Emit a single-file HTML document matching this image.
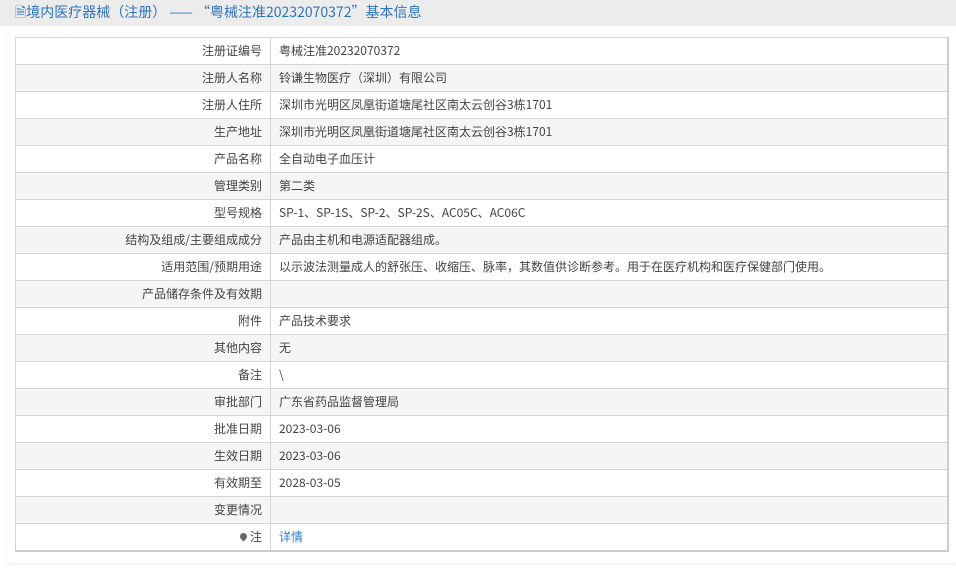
<!DOCTYPE html>
<html><head><meta charset="utf-8"><style>
html,body{margin:0;padding:0;background:#fff;width:956px;height:576px;overflow:hidden;font-family:"Noto Sans CJK SC","Liberation Sans",sans-serif;font-size:12px;color:#444}
.hd{height:26px;background:#ececec;color:#2f74c0;font-size:14px;line-height:25px;padding-left:15px}
.wrap{position:absolute;left:7px;top:26px;width:949px;height:537px;background:#fff;box-shadow:0 1px 3px rgba(0,0,0,.08)}
table{position:absolute;left:15px;top:37px;width:934px;border-collapse:collapse;border:1px solid #ccc;border-right:2px solid #ccc;border-bottom:2px solid #ccc}
td{height:26px;border:1px solid #d6d6d6;padding:0 8px;vertical-align:middle;white-space:nowrap;line-height:14px}
td.l{width:238px;text-align:right;padding-right:8px}
tr:nth-child(even){background:#f5f5f5}
a{color:#2b7fd0;text-decoration:none}
.pin{display:inline-block;width:7px;height:7px;border-radius:50% 50% 50% 0;transform:rotate(-45deg);background:#666;margin-right:3px;vertical-align:1px}
</style></head><body>
<div class="hd">&#128462;境内医疗器械（注册） —— “粤械注准20232070372”基本信息</div>
<div class="wrap"></div>
<table>
<tr><td class="l">注册证编号</td><td>粤械注准20232070372</td></tr>
<tr><td class="l">注册人名称</td><td>铃谦生物医疗（深圳）有限公司</td></tr>
<tr><td class="l">注册人住所</td><td>深圳市光明区凤凰街道塘尾社区南太云创谷3栋1701</td></tr>
<tr><td class="l">生产地址</td><td>深圳市光明区凤凰街道塘尾社区南太云创谷3栋1701</td></tr>
<tr><td class="l">产品名称</td><td>全自动电子血压计</td></tr>
<tr><td class="l">管理类别</td><td>第二类</td></tr>
<tr><td class="l">型号规格</td><td>SP-1、SP-1S、SP-2、SP-2S、AC05C、AC06C</td></tr>
<tr><td class="l">结构及组成/主要组成成分</td><td>产品由主机和电源适配器组成。</td></tr>
<tr><td class="l">适用范围/预期用途</td><td>以示波法测量成人的舒张压、收缩压、脉率，其数值供诊断参考。用于在医疗机构和医疗保健部门使用。</td></tr>
<tr><td class="l">产品储存条件及有效期</td><td></td></tr>
<tr><td class="l">附件</td><td>产品技术要求</td></tr>
<tr><td class="l">其他内容</td><td>无</td></tr>
<tr><td class="l">备注</td><td>\</td></tr>
<tr><td class="l">审批部门</td><td>广东省药品监督管理局</td></tr>
<tr><td class="l">批准日期</td><td>2023-03-06</td></tr>
<tr><td class="l">生效日期</td><td>2023-03-06</td></tr>
<tr><td class="l">有效期至</td><td>2028-03-05</td></tr>
<tr><td class="l">变更情况</td><td></td></tr>
<tr><td class="l"><span class="pin"></span>注</td><td><a>详情</a></td></tr>
</table>
</body></html>
